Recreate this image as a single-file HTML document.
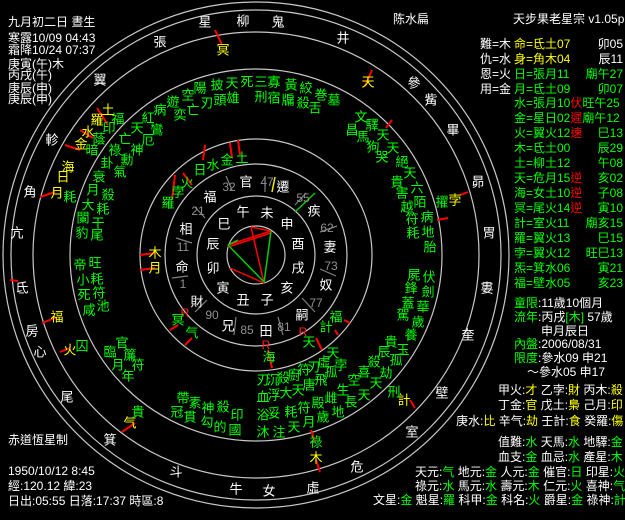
<!DOCTYPE html>
<html><head><meta charset="utf-8">
<style>
html,body{margin:0;padding:0;background:#000;}
svg{display:block;}
text{font-family:"Liberation Sans","Noto Sans CJK TC","WenQuanYi Zen Hei",sans-serif;}
.w{fill:#fff;font-size:12px;}
.g{fill:#00ff00;font-size:13px;text-anchor:middle;dominant-baseline:central;}
.y{fill:#ffff00;font-size:13px;text-anchor:middle;dominant-baseline:central;}
.r{fill:#ff2020;font-size:12px;text-anchor:middle;dominant-baseline:central;}
.m{fill:#fff;font-size:13px;text-anchor:middle;dominant-baseline:central;}
.n{fill:#909090;font-size:12px;text-anchor:middle;dominant-baseline:central;}
.p{font-size:12px;fill:#fff;}
</style></head><body>
<svg id="s" width="625" height="520" viewBox="0 0 625 520" xmlns="http://www.w3.org/2000/svg">
<rect width="625" height="520" fill="#000"/>
<g id="rings" fill="none" stroke="#c8c8c8" stroke-width="1.2">
<circle cx="256" cy="255" r="29"/><circle cx="256" cy="255" r="59"/><circle cx="256" cy="255" r="91"/>
<circle cx="256" cy="255" r="116"/><circle cx="256" cy="255" r="186"/><circle cx="256" cy="255" r="223"/>
<circle cx="256" cy="255" r="245"/><circle cx="256" cy="255" r="253"/>
</g>
<g id="lines" stroke="#c8c8c8" stroke-width="1.1"></g>
<g stroke-width="1.5">
<line x1="251" y1="227" x2="271" y2="231" stroke="#f00"/>
<line x1="228" y1="245" x2="271" y2="231" stroke="#f00"/>
<line x1="228" y1="247" x2="271" y2="233" stroke="#f00"/>
<line x1="251" y1="227" x2="264" y2="283" stroke="#f00"/>
<line x1="228" y1="245" x2="264" y2="282" stroke="#0c0"/>
<line x1="271" y1="231" x2="264" y2="283" stroke="#0c0"/>
<line x1="230" y1="268" x2="264" y2="283" stroke="#f00"/>
<line x1="228" y1="245" x2="238" y2="240" stroke="#0c0"/>
</g>
<g stroke="#f00" stroke-width="2">
<line x1="215" y1="30" x2="222" y2="45"/><line x1="372" y1="70" x2="365" y2="86"/>
<line x1="97" y1="108" x2="108" y2="125"/><line x1="80" y1="130" x2="93" y2="138"/><line x1="65" y1="145" x2="80" y2="150"/>
<line x1="205" y1="145" x2="203" y2="160"/><line x1="238" y1="140" x2="240" y2="155"/><line x1="230" y1="143" x2="232" y2="158"/>
<line x1="175" y1="175" x2="172" y2="200"/><line x1="183" y1="173" x2="192" y2="185"/>
<line x1="140" y1="255" x2="155" y2="253"/><line x1="140" y1="270" x2="155" y2="268"/>
<line x1="40" y1="197" x2="55" y2="192"/><line x1="42" y1="323" x2="55" y2="318"/><line x1="60" y1="352" x2="70" y2="348"/>
<line x1="170" y1="330" x2="178" y2="325"/><line x1="185" y1="345" x2="192" y2="338"/>
<line x1="122" y1="432" x2="135" y2="423"/><line x1="311" y1="430" x2="315" y2="442"/><line x1="316" y1="460" x2="320" y2="472"/>
<line x1="268" y1="350" x2="272" y2="368"/><line x1="316" y1="338" x2="322" y2="350"/><line x1="335" y1="330" x2="338" y2="335"/>
<line x1="344" y1="320" x2="350" y2="323"/><line x1="410" y1="400" x2="415" y2="408"/><line x1="460" y1="195" x2="468" y2="192"/>
<line x1="437" y1="220" x2="448" y2="218"/><line x1="10" y1="280" x2="18" y2="281"/><line x1="386" y1="128" x2="392" y2="120"/>
</g>
<g stroke="#808080" stroke-width="1.2">
<line x1="226" y1="176" x2="232" y2="190"/><line x1="265" y1="176" x2="265" y2="192"/><line x1="306" y1="193" x2="295" y2="205"/>
<line x1="320" y1="232" x2="337" y2="226"/><line x1="320" y1="269" x2="336" y2="276"/><line x1="302" y1="298" x2="315" y2="312"/>
<line x1="278" y1="317" x2="283" y2="335"/><line x1="236" y1="317" x2="234" y2="335"/><line x1="207" y1="300" x2="195" y2="312"/>
<line x1="172" y1="278" x2="188" y2="276"/><line x1="176" y1="238" x2="192" y2="243"/><line x1="195" y1="207" x2="205" y2="218"/>
</g>
<line x1="275" y1="177" x2="272" y2="192" stroke="#ee0" stroke-width="1.5"/>
<line x1="295" y1="212" x2="315" y2="193" stroke="#0c0" stroke-width="1.5"/>

<!-- left info -->
<text class="w" x="8" y="26">九月初二日 晝生</text>
<text class="w" x="8" y="42">寒露10/09 04:43</text>
<text class="w" x="8" y="54">霜降10/24 07:37</text>
<text class="w" x="8" y="68">庚寅(午)木</text>
<text class="w" x="8" y="79">丙戌(午)</text>
<text class="w" x="8" y="92">庚辰(申)</text>
<text class="w" x="8" y="103">庚辰(申)</text>
<text class="p" x="8" y="444">赤道恆星制</text>
<text class="p" x="8" y="475">1950/10/12 8:45</text>
<text class="p" x="8" y="490">經:120.12 緯:23</text>
<text class="p" x="8" y="505">日出:05:55 日落:17:37 時區:8</text>
<text class="p" x="393" y="23">陈水扁</text>

<!-- right panel -->
<text class="p" x="513" y="23">天步果老星宗 v1.05p</text>
<g font-size="12">
<text class="p" x="480" y="48">難=木</text><text class="p" x="480" y="63">仇=水</text><text class="p" x="480" y="78">恩=火</text><text class="p" x="480" y="93">用=金</text>
<text x="514" y="48" fill="#ff0">命=氐土07</text><text x="623" y="48" fill="#fff" text-anchor="end">卯05</text>
<text x="514" y="63" fill="#ff0">身=角木04</text><text x="623" y="63" fill="#fff" text-anchor="end">辰11</text>
<g fill="#00ff00">
<text x="514" y="78">日=張月11</text><text x="623" y="78" text-anchor="end">廟午27</text>
<text x="514" y="93">月=氐土09</text><text x="623" y="93" text-anchor="end">卯07</text>
<text x="514" y="107">水=張月10<tspan fill="#f00">伏</tspan>旺午25</text>
<text x="514" y="122">金=星日02<tspan fill="#f00">遲</tspan>廟午12</text>
<text x="514" y="137">火=翼火12<tspan fill="#f00">速</tspan></text><text x="623" y="137" text-anchor="end">巳13</text>
<text x="514" y="152">木=氐土00</text><text x="623" y="152" text-anchor="end">辰29</text>
<text x="514" y="167">土=柳土12</text><text x="623" y="167" text-anchor="end">午08</text>
<text x="514" y="182">天=危月15<tspan fill="#f00">逆</tspan></text><text x="623" y="182" text-anchor="end">亥02</text>
<text x="514" y="197">海=女土10<tspan fill="#f00">逆</tspan></text><text x="623" y="197" text-anchor="end">子08</text>
<text x="514" y="212">冥=尾火14<tspan fill="#f00">逆</tspan></text><text x="623" y="212" text-anchor="end">寅10</text>
<text x="514" y="227">計=室火11</text><text x="623" y="227" text-anchor="end">廟亥15</text>
<text x="514" y="242">羅=翼火13</text><text x="623" y="242" text-anchor="end">巳15</text>
<text x="514" y="257">孛=翼火12</text><text x="623" y="257" text-anchor="end">旺巳13</text>
<text x="514" y="272">炁=箕水06</text><text x="623" y="272" text-anchor="end">寅21</text>
<text x="514" y="287">福=壁水05</text><text x="623" y="287" text-anchor="end">亥23</text>
</g>
<text x="514" y="307" fill="#0f0">童限<tspan fill="#fff">:11歲10個月</tspan></text>
<text x="514" y="321" fill="#0f0">流年<tspan fill="#fff">:丙戌</tspan><tspan fill="#0f0">[木]</tspan><tspan fill="#fff">  57歲</tspan></text>
<text x="541" y="335" fill="#fff">申月辰日</text>
<text x="514" y="348" fill="#0f0">內盤<tspan fill="#fff">:2006/08/31</tspan></text>
<text x="514" y="362" fill="#0f0">限度<tspan fill="#fff">:參水09   申21</tspan></text>
<text x="527" y="376" fill="#fff">～參水05   申17</text>
<g fill="#fff">
<text x="498" y="394">甲火:<tspan fill="#ff0">才</tspan> 乙孛:<tspan fill="#ff0">財</tspan> 丙木:<tspan fill="#ff0">殺</tspan></text>
<text x="498" y="409">丁金:<tspan fill="#ff0">官</tspan> 戊土:<tspan fill="#ff0">梟</tspan> 己月:<tspan fill="#ff0">印</tspan></text>
<text x="456" y="425">庚水:<tspan fill="#ff0">比</tspan> 辛气:<tspan fill="#ff0">劫</tspan> 壬計:<tspan fill="#ff0">食</tspan> 癸羅:<tspan fill="#ff0">傷</tspan></text>
<text x="498" y="446">值難:<tspan fill="#0f0">水</tspan> 天馬:<tspan fill="#0f0">水</tspan> 地驛:<tspan fill="#0f0">金</tspan></text>
<text x="498" y="461">血支:<tspan fill="#0f0">金</tspan> 血忌:<tspan fill="#0f0">水</tspan> 產星:<tspan fill="#0f0">木</tspan></text>
<text x="415" y="476">天元:<tspan fill="#0f0">气</tspan> 地元:<tspan fill="#0f0">金</tspan> 人元:<tspan fill="#0f0">金</tspan> 催官:<tspan fill="#0f0">日</tspan> 印星:<tspan fill="#0f0">火</tspan></text>
<text x="415" y="490">祿元:<tspan fill="#0f0">水</tspan> 馬元:<tspan fill="#0f0">水</tspan> 壽元:<tspan fill="#0f0">木</tspan> 仁元:<tspan fill="#0f0">火</tspan> 喜神:<tspan fill="#0f0">气</tspan></text>
<text x="373" y="504">文星:<tspan fill="#0f0">金</tspan> 魁星:<tspan fill="#0f0">羅</tspan> 科甲:<tspan fill="#0f0">金</tspan> 科名:<tspan fill="#0f0">火</tspan> 爵星:<tspan fill="#0f0">金</tspan> 祿神:<tspan fill="#0f0">計</tspan></text>
</g>
</g>

<!-- mansions -->
<g>
<text class="m" x="160" y="42">張</text><text class="m" x="205" y="22">星</text><text class="m" x="243" y="21">柳</text><text class="m" x="278" y="22">鬼</text>
<text class="m" x="343" y="38">井</text><text class="m" x="414" y="83">參</text><text class="m" x="431" y="100">觜</text><text class="m" x="453" y="130">畢</text>
<text class="m" x="478" y="182">昴</text><text class="m" x="489" y="233">胃</text><text class="m" x="487" y="288">婁</text><text class="m" x="468" y="335">奎</text>
<text class="m" x="442" y="393">壁</text><text class="m" x="412" y="432">室</text><text class="m" x="357" y="467">危</text><text class="m" x="313" y="488">虛</text>
<text class="m" x="269" y="491">女</text><text class="m" x="236" y="489">牛</text><text class="m" x="176" y="472">斗</text><text class="m" x="110" y="440">箕</text>
<text class="m" x="67" y="397">尾</text><text class="m" x="40" y="352">心</text><text class="m" x="32" y="331">房</text><text class="m" x="22" y="288">氐</text>
<text class="m" x="17" y="233">亢</text><text class="m" x="30" y="192">角</text><text class="m" x="52" y="140">軫</text><text class="m" x="100" y="80">翼</text>
</g>
<!-- palaces/branches -->
<g>
<text class="m" x="246" y="182">官</text><text class="m" x="283" y="187">遷</text><text class="m" x="314" y="211">疾</text><text class="m" x="330" y="247">妻</text>
<text class="m" x="326" y="285">奴</text><text class="m" x="302" y="315">嗣</text><text class="m" x="266" y="331">田</text><text class="m" x="228" y="326">兄</text>
<text class="m" x="197" y="302">財</text><text class="m" x="182" y="267">命</text><text class="m" x="186" y="229">相</text><text class="m" x="210" y="197">福</text>
<text class="n" x="229" y="187">32</text><text class="n" x="267" y="182">47</text><text class="n" x="303" y="198">55</text><text class="n" x="327" y="228">62</text>
<text class="n" x="331" y="266">73</text><text class="n" x="316" y="303">77</text><text class="n" x="284" y="327">81</text><text class="n" x="247" y="330">85</text>
<text class="n" x="212" y="315">90</text><text class="n" x="183" y="284">1</text><text class="n" x="183" y="247">11</text><text class="n" x="198" y="211">21</text>
<text class="m" x="243" y="212">午</text><text class="m" x="267" y="213">未</text><text class="m" x="287" y="224">申</text><text class="m" x="298" y="244">酉</text>
<text class="m" x="298" y="268">戌</text><text class="m" x="287" y="288">亥</text><text class="m" x="267" y="300">子</text><text class="m" x="243" y="300">丑</text>
<text class="m" x="223" y="288">寅</text><text class="m" x="213" y="268">卯</text><text class="m" x="213" y="244">辰</text><text class="m" x="224" y="224">巳</text>
</g>
<!-- yellow planets -->
<g>
<text class="y" x="223" y="50">冥</text><text class="y" x="368" y="82">天</text><text class="y" x="108" y="110">土</text><text class="y" x="97" y="120">羅</text>
<text class="y" x="88" y="132">水</text><text class="y" x="81" y="144">金</text><text class="y" x="68" y="167">海</text><text class="y" x="63" y="177">日</text>
<text class="y" x="57" y="193">月</text><text class="y" x="155" y="253">木</text><text class="y" x="155" y="268">月</text><text class="y" x="57" y="317">福</text>
<text class="y" x="70" y="350">火</text><text class="y" x="130" y="423">气</text><text class="y" x="316" y="458">木</text><text class="y" x="404" y="400">計</text>
<text class="y" x="455" y="200">孛</text>
<text class="r" x="185" y="313">R</text><text class="r" x="303" y="332">R</text><text class="r" x="266" y="345">R</text>
</g>
<!-- green stars -->
<g>
<text class="g" x="118" y="119">福</text><text class="g" x="109" y="128">印</text><text class="g" x="99" y="139">蔭</text><text class="g" x="92" y="150">暗</text>
<text class="g" x="148" y="118">紅</text><text class="g" x="137" y="128">天</text><text class="g" x="148" y="140">厄</text><text class="g" x="157" y="130">鸞</text>
<text class="g" x="125" y="139">亡</text><text class="g" x="137" y="150">神</text><text class="g" x="115" y="150">祿</text><text class="g" x="127" y="160">勳</text>
<text class="g" x="107" y="163">卦</text><text class="g" x="120" y="172">氣</text>
<text class="g" x="160" y="110">病</text><text class="g" x="173" y="102">遊</text><text class="g" x="180" y="115">奕</text><text class="g" x="188" y="95">空</text>
<text class="g" x="193" y="110">亡</text><text class="g" x="200" y="88">陽</text><text class="g" x="207" y="103">刃</text><text class="g" x="217" y="85">披</text>
<text class="g" x="220" y="100">頭</text><text class="g" x="232" y="83">天</text><text class="g" x="233" y="98">雄</text><text class="g" x="247" y="82">死</text>
<text class="g" x="200" y="170">日</text><text class="g" x="213" y="165">水</text><text class="g" x="227" y="160">金</text><text class="g" x="242" y="158">土</text>
<text class="g" x="187" y="183">火</text><text class="g" x="178" y="192">孛</text><text class="g" x="168" y="203">羅</text>
<text class="g" x="99" y="177">衰</text><text class="g" x="93" y="190">月</text><text class="g" x="108" y="195">殺</text><text class="g" x="88" y="205">大</text>
<text class="g" x="103" y="209">耗</text><text class="g" x="83" y="218">闌</text><text class="g" x="98" y="223">干</text><text class="g" x="82" y="233">豹</text>
<text class="g" x="97" y="235">尾</text><text class="g" x="70" y="197">耗</text>
<text class="g" x="80" y="265">帝</text><text class="g" x="95" y="263">旺</text><text class="g" x="83" y="280">小</text><text class="g" x="97" y="279">耗</text>
<text class="g" x="84" y="295">死</text><text class="g" x="99" y="293">符</text><text class="g" x="89" y="310">咸</text><text class="g" x="103" y="306">池</text>
<text class="g" x="82" y="346">囚</text><text class="g" x="110" y="352">臨</text><text class="g" x="122" y="343">官</text><text class="g" x="130" y="355">簾</text>
<text class="g" x="138" y="365">符</text><text class="g" x="118" y="365">月</text><text class="g" x="128" y="376">年</text>
<text class="g" x="178" y="320">冥</text><text class="g" x="192" y="333">气</text><text class="g" x="138" y="412">貴</text>
<text class="g" x="183" y="398">帶</text><text class="g" x="177" y="412">冠</text><text class="g" x="195" y="403">素</text><text class="g" x="190" y="417">貫</text>
<text class="g" x="208" y="408">神</text><text class="g" x="207" y="422">勾</text><text class="g" x="223" y="407">殺</text><text class="g" x="220" y="427">的</text>
<text class="g" x="237" y="415">印</text><text class="g" x="235" y="430">國</text>
<text class="g" x="336" y="317">福</text><text class="g" x="326" y="327">計</text><text class="g" x="309" y="342">天</text><text class="g" x="269" y="357">海</text>
<text class="g" x="333" y="353">天</text><text class="g" x="324" y="362">虛</text><text class="g" x="341" y="365">孛</text><text class="g" x="314" y="367">刃</text>
<text class="g" x="331" y="372">孤</text><text class="g" x="321" y="380">飛</text><text class="g" x="304" y="370">符</text><text class="g" x="294" y="375">廚</text>
<text class="g" x="283" y="378">殺</text><text class="g" x="273" y="380">沉</text><text class="g" x="263" y="380">刃</text>
<text class="g" x="263" y="397">血</text><text class="g" x="274" y="395">浮</text><text class="g" x="286" y="393">大</text><text class="g" x="298" y="390">天</text>
<text class="g" x="309" y="385">唐</text><text class="g" x="318" y="403">殿</text><text class="g" x="331" y="398">雌</text><text class="g" x="343" y="390">生</text>
<text class="g" x="351" y="402">長</text><text class="g" x="354" y="380">空</text><text class="g" x="364" y="395">天</text><text class="g" x="364" y="372">喜</text>
<text class="g" x="376" y="383">天</text><text class="g" x="374" y="362">殺</text><text class="g" x="386" y="373">劫</text><text class="g" x="384" y="352">辰</text>
<text class="g" x="396" y="360">孤</text><text class="g" x="391" y="342">貴</text><text class="g" x="403" y="350">玉</text><text class="g" x="394" y="392">刑</text>
<text class="g" x="263" y="415">浴</text><text class="g" x="263" y="432">沐</text><text class="g" x="274" y="413">妥</text><text class="g" x="279" y="432">注</text>
<text class="g" x="291" y="412">耗</text><text class="g" x="294" y="427">天</text><text class="g" x="304" y="408">符</text><text class="g" x="309" y="422">月</text>
<text class="g" x="323" y="417">歲</text><text class="g" x="338" y="412">地</text><text class="g" x="316" y="442">祿</text>
<text class="g" x="414" y="275">屍</text><text class="g" x="429" y="277">伏</text><text class="g" x="411" y="288">鋒</text><text class="g" x="428" y="292">劍</text>
<text class="g" x="408" y="303">蓋</text><text class="g" x="423" y="307">華</text><text class="g" x="403" y="315">駕</text><text class="g" x="418" y="322">歲</text>
<text class="g" x="411" y="335">養</text>
<text class="g" x="361" y="117">文</text><text class="g" x="352" y="130">昌</text><text class="g" x="363" y="137">馬</text><text class="g" x="372" y="125">驛</text>
<text class="g" x="383" y="135">天</text><text class="g" x="373" y="147">狗</text><text class="g" x="393" y="148">天</text><text class="g" x="382" y="157">哭</text>
<text class="g" x="402" y="162">絕</text><text class="g" x="410" y="173">天</text><text class="g" x="397" y="182">貴</text><text class="g" x="417" y="188">六</text>
<text class="g" x="402" y="193">害</text><text class="g" x="420" y="202">陌</text><text class="g" x="407" y="207">越</text><text class="g" x="427" y="217">病</text>
<text class="g" x="412" y="219">符</text><text class="g" x="428" y="232">地</text><text class="g" x="413" y="233">耗</text><text class="g" x="430" y="247">胎</text>
<text class="g" x="442" y="202">擢</text>
<text class="g" x="261" y="82">三</text><text class="g" x="274" y="82">寡</text><text class="g" x="291" y="85">黃</text><text class="g" x="306" y="88">絞</text>
<text class="g" x="321" y="95">巻</text><text class="g" x="334" y="100">墓</text><text class="g" x="261" y="97">刑</text><text class="g" x="274" y="98">宿</text>
<text class="g" x="288" y="100">牖</text><text class="g" x="303" y="103">殺</text><text class="g" x="315" y="108">舌</text>
</g>
<script>
(function(){
var ns="http://www.w3.org/2000/svg",g=document.getElementById('lines'),cx=256,cy=255;
function L(a,r1,r2){var t=a*Math.PI/180,l=document.createElementNS(ns,'line');
l.setAttribute('x1',cx+r1*Math.cos(t));l.setAttribute('y1',cy-r1*Math.sin(t));
l.setAttribute('x2',cx+r2*Math.cos(t));l.setAttribute('y2',cy-r2*Math.sin(t));g.appendChild(l);}
for(var i=0;i<12;i++)L(i*30,29,223);
for(var a=0;a<360;a+=4.2)L(a,245,253);
var m=[[160,42],[205,22],[243,21],[278,22],[343,38],[414,83],[431,100],[453,130],[478,182],[489,233],[487,288],[468,335],[442,393],[412,432],[357,467],[313,488],[269,491],[236,489],[176,472],[110,440],[67,397],[40,352],[32,331],[22,288],[17,233],[30,192],[52,140],[100,80]];
var ang=m.map(function(p){return Math.atan2(cy-p[1],p[0]-cx)*180/Math.PI;});
for(var k=0;k<ang.length;k++){var a1=ang[k],a2=ang[(k+1)%ang.length];var d=a2-a1;while(d>180)d-=360;while(d<-180)d+=360;L(a1+d/2,223,253);}
})();
</script>
</svg>
</body></html>
